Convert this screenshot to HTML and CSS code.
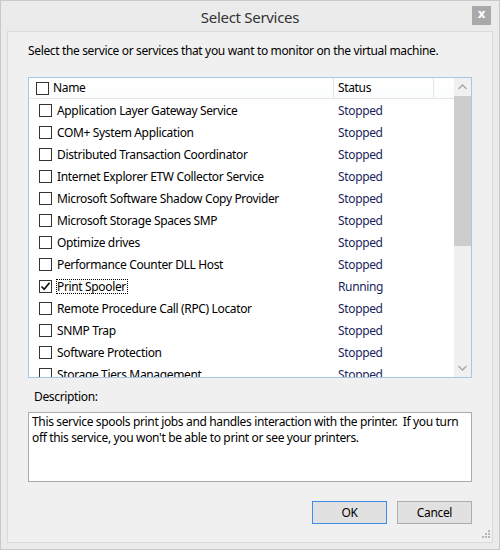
FILE: index.html
```html
<!DOCTYPE html>
<html>
<head>
<meta charset="utf-8">
<link rel="stylesheet" href="styles.css">
</head>
<body>
<div class="window">
  <div class="titlebar">
    <div class="title">Select Services</div>
    <div class="close">x</div>
  </div>
  <div class="panel">
    <div class="intro">Select the service or services that you want to monitor on the virtual machine.</div>
    <div class="listbox">
      <div class="list">
        <div class="header">
          <div class="hcell hname"><span class="cb"></span><span>Name</span></div>
          <div class="hcell hstatus">Status</div>
          <div class="hcell hrest"></div>
        </div>
        <div class="row"><div class="name"><span class="cb"></span><span class="lbl">Application Layer Gateway Service</span></div><div class="status">Stopped</div></div>
        <div class="row"><div class="name"><span class="cb"></span><span class="lbl">COM+ System Application</span></div><div class="status">Stopped</div></div>
        <div class="row"><div class="name"><span class="cb"></span><span class="lbl">Distributed Transaction Coordinator</span></div><div class="status">Stopped</div></div>
        <div class="row"><div class="name"><span class="cb"></span><span class="lbl">Internet Explorer ETW Collector Service</span></div><div class="status">Stopped</div></div>
        <div class="row"><div class="name"><span class="cb"></span><span class="lbl">Microsoft Software Shadow Copy Provider</span></div><div class="status">Stopped</div></div>
        <div class="row"><div class="name"><span class="cb"></span><span class="lbl">Microsoft Storage Spaces SMP</span></div><div class="status">Stopped</div></div>
        <div class="row"><div class="name"><span class="cb"></span><span class="lbl">Optimize drives</span></div><div class="status">Stopped</div></div>
        <div class="row"><div class="name"><span class="cb"></span><span class="lbl">Performance Counter DLL Host</span></div><div class="status">Stopped</div></div>
        <div class="row"><div class="name"><span class="cb checked"><svg width="11" height="11" viewBox="0 0 11 11"><path d="M1.5 5.5 L4.2 8.3 L9.5 1.8" fill="none" stroke="#111" stroke-width="1.7"/></svg></span><span class="lbl focus">Print Spooler</span></div><div class="status">Running</div></div>
        <div class="row"><div class="name"><span class="cb"></span><span class="lbl">Remote Procedure Call (RPC) Locator</span></div><div class="status">Stopped</div></div>
        <div class="row"><div class="name"><span class="cb"></span><span class="lbl">SNMP Trap</span></div><div class="status">Stopped</div></div>
        <div class="row"><div class="name"><span class="cb"></span><span class="lbl">Software Protection</span></div><div class="status">Stopped</div></div>
        <div class="row"><div class="name"><span class="cb"></span><span class="lbl">Storage Tiers Management</span></div><div class="status">Stopped</div></div>
      </div>
      <div class="scrollbar">
        <div class="arrow"><svg width="9" height="6" viewBox="0 0 9 6"><path d="M0.5 5 L4.5 1 L8.5 5" fill="none" stroke="#a6a6a6" stroke-width="1.3"/></svg></div>
        <div class="thumb"></div>
        <div class="track"></div>
        <div class="arrow"><svg width="9" height="6" viewBox="0 0 9 6"><path d="M0.5 1 L4.5 5 L8.5 1" fill="none" stroke="#a6a6a6" stroke-width="1.3"/></svg></div>
      </div>
    </div>
    <div class="desc-label">Description:</div>
    <div class="desc">This service spools print jobs and handles interaction with the printer.&nbsp; If you turn off this service, you won't be able to print or see your printers.</div>
    <div class="buttons">
      <div class="btn default">OK</div>
      <div class="btn">Cancel</div>
    </div>
    <svg class="grip" width="10" height="10" viewBox="0 0 10 10">
      <g fill="#b8b8b8">
        <rect x="8" y="0" width="2" height="2"/>
        <rect x="5" y="3" width="2" height="2"/><rect x="8" y="3" width="2" height="2"/>
        <rect x="2" y="6" width="2" height="2"/><rect x="5" y="6" width="2" height="2"/><rect x="8" y="6" width="2" height="2"/>
      </g>
    </svg>
  </div>
</div>
</body>
</html>
```
FILE: styles.css
```css
html, body {
  margin: 0;
  padding: 0;
  background: #ebebeb;
}
body {
  font-family: "Segoe UI", "Noto Sans", "Open Sans", sans-serif;
  font-size: 12px;
  letter-spacing: -0.35px;
  color: #000;
}
.window {
  width: 500px;
  height: 550px;
  box-sizing: border-box;
  border: 1px solid #c9c9c9;
  background: #ebebeb;
  padding: 0 6px;
}
.titlebar {
  height: 30px;
  display: flex;
  align-items: center;
  justify-content: center;
  position: relative;
}
.title {
  font-size: 15px;
  color: #333;
  margin-top: 1px;
  letter-spacing: -0.3px;
}
.close {
  position: absolute;
  right: 2px;
  top: 5px;
  width: 19px;
  height: 19px;
  background: #a9a9a9;
  color: #fff;
  font-weight: bold;
  font-size: 12px;
  line-height: 17px;
  text-align: center;
  letter-spacing: 0;
  font-family: "DejaVu Sans", sans-serif;
}
.panel {
  position: relative;
  height: 512px;
  box-sizing: border-box;
  border: 1px solid #dadada;
  background: #f0f0f0;
  padding: 10px 20px 0 20px;
}
.intro {
  line-height: 16px;
  margin-top: 1px;
}
.listbox {
  margin-top: 18px;
  height: 301px;
  box-sizing: border-box;
  border: 1px solid #a9c7e3;
  background: #fff;
  display: flex;
}
.list {
  flex: 1;
  overflow: hidden;
}
.header {
  display: grid;
  grid-template-columns: 305px 100px 1fr;
  height: 21px;
  box-sizing: border-box;
  border-bottom: 1px solid #e5e5e5;
  background: linear-gradient(#ffffff, #fbfcfd);
}
.hcell {
  display: flex;
  align-items: center;
  line-height: 16px;
}
.hname {
  padding-left: 7px;
  gap: 4px;
  border-right: 1px solid #e5e5e5;
}
.hstatus {
  padding-left: 4px;
  border-right: 1px solid #e5e5e5;
}
.cb {
  width: 13px;
  height: 13px;
  box-sizing: border-box;
  border: 1px solid #333;
  background: #fff;
  display: inline-flex;
  align-items: center;
  justify-content: center;
  flex: none;
}
.row {
  display: grid;
  grid-template-columns: 305px 100px 1fr;
  height: 22px;
  align-items: center;
}
.name {
  display: flex;
  align-items: center;
  padding-left: 10px;
  gap: 4px;
}
.lbl {
  line-height: 13px;
  border: 1px dotted transparent;
  white-space: nowrap;
}
.lbl.focus {
  border-color: #000;
  padding-right: 1px;
}
.status {
  padding-left: 4px;
  color: #1a1f5c;
}
.scrollbar {
  width: 17px;
  background: #f0f0f0;
  display: flex;
  flex-direction: column;
}
.arrow {
  height: 18px;
  display: flex;
  align-items: center;
  justify-content: center;
  flex: none;
}
.thumb {
  height: 150px;
  background: #cdcdcd;
  flex: none;
}
.track {
  flex: 1;
}
.desc-label {
  margin-top: 11px;
  padding-left: 6px;
  line-height: 16px;
}
.desc {
  margin-top: 7px;
  height: 70px;
  box-sizing: border-box;
  border: 1px solid #ababab;
  background: #fff;
  padding: 1px 3px;
  line-height: 16px;
}
.buttons {
  margin-top: 19px;
  display: flex;
  justify-content: flex-end;
  gap: 10px;
}
.btn {
  width: 75px;
  height: 23px;
  box-sizing: border-box;
  border: 1px solid #adadad;
  background: #e1e1e1;
  display: flex;
  align-items: center;
  justify-content: center;
}
.btn.default {
  border-color: #3c8ee6;
}
.grip {
  position: absolute;
  right: 2px;
  bottom: 2px;
}
```
